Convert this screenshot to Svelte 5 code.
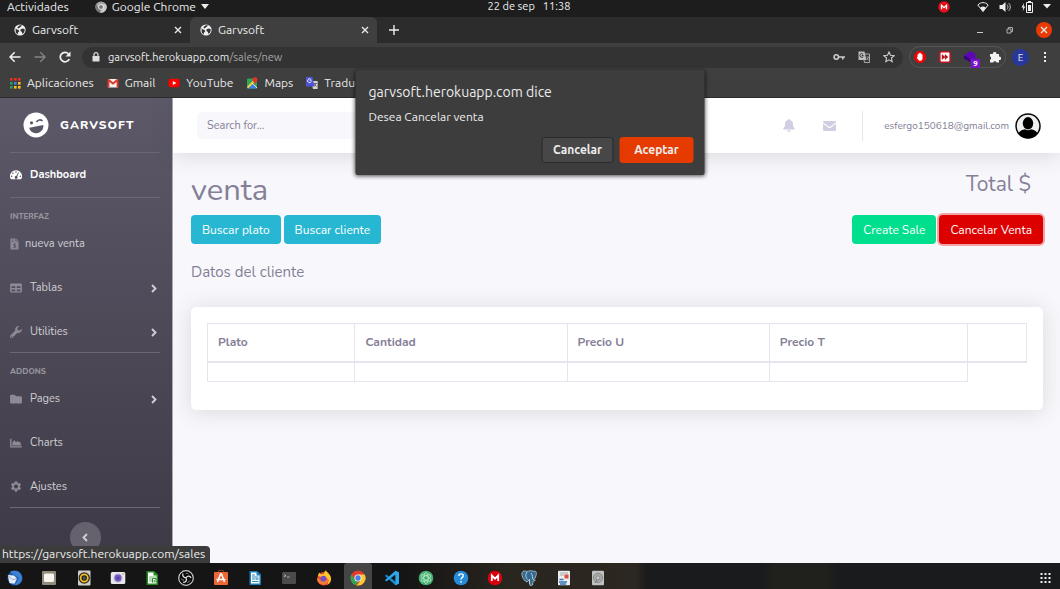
<script>
  const tabs = [
    { title: 'Garvsoft', active: false },
    { title: 'Garvsoft', active: true },
  ];
  const bookmarks = [
    { name: 'apps', label: 'Aplicaciones' },
    { name: 'gmail', label: 'Gmail' },
    { name: 'youtube', label: 'YouTube' },
    { name: 'maps', label: 'Maps' },
    { name: 'translate', label: 'Traductor' },
  ];
  const appColors = ['#ee2d20', '#ee2d20', '#ee2d20', '#22a45d', '#3f7ff0', '#fbc116', '#22a45d', '#fbc116', '#fbc116'];
  const interfaz = [
    { icon: 'invoice', label: 'nueva venta', tight: true },
    { icon: 'table', label: 'Tablas', more: true },
    { icon: 'wrench', label: 'Utilities', more: true },
  ];
  const addons = [
    { icon: 'folder', label: 'Pages', more: true },
    { icon: 'chart', label: 'Charts' },
    { icon: 'cog', label: 'Ajustes' },
  ];
  const columns = ['Plato', 'Cantidad', 'Precio U', 'Precio T', ''];
  const dock = [
    'thunderbird', 'files', 'rhythmbox', 'cheese', 'calc', 'obs', 'software', 'writer', 'terminal',
    'firefox', 'chrome', 'vscode', 'atom', 'help', 'mega', 'postgres', 'document', 'disk',
  ];
  let search = $state('');
</script>

{#snippet globe()}
  <svg class="i12" viewBox="0 0 12 12" aria-hidden="true">
    <circle cx="6" cy="6" r="5.6" fill="#f1f1f1" />
    <path d="M1.5 4.2 3 5.6l1.6.4.6 1.4L4 8.6 3.6 10.4 1.8 8.600Z M5.2 1.4l2.500-.3L7.200 2.600 5.600 3.400 4.700 4.500 3.200 3.800Z M6.600 5.200l2.600-.8 1.600 1.200-.6 2.600-1.600 1.800-.9-2.200-1.300-.8Z" fill="#333" />
  </svg>
{/snippet}

{#snippet cross()}
  <svg width="8" height="8" viewBox="0 0 8 8" aria-hidden="true"><path d="m1 1 6 6M7 1 1 7" stroke="#e8e8e8" stroke-width="1.4" /></svg>
{/snippet}

{#snippet chromeLogo(size, mono)}
  <svg width={size} height={size} viewBox="0 0 16 16" aria-hidden="true">
    <circle cx="8" cy="8" r="7.500" fill={mono ? '#a5a5a5' : '#e33b2e'} />
    <path d="M1.500 4.300 4.900 10l3.100 1.600-1.800 3.700A7.500 7.500 0 0 1 1.500 4.300Z" fill={mono ? '#777' : '#2da94f'} />
    <path d="M8 4.400h6.600a7.500 7.500 0 0 1-8.100 11L11 10Z" fill={mono ? '#c9c9c9' : '#fdc92f'} />
    <circle cx="8" cy="8" r="3.600" fill="#f4f4f4" /><circle cx="8" cy="8" r="2.700" fill={mono ? '#777' : '#4380e8'} />
  </svg>
{/snippet}

{#snippet markIcon(name)}
  <svg class="i12" viewBox="0 0 12 12" aria-hidden="true">
    {#if name === 'apps'}
      {#each appColors as color, k}
        <rect x={1 + (k % 3) * 4} y={1 + Math.floor(k / 3) * 4} width="2.600" height="2.600" fill={color} />
      {/each}
    {:else if name === 'gmail'}
      <path d="M1 2h10v8.500H1Z" fill="#f3f3f3" /><path d="M.5 10.500V2H2l4 3.200L10 2h1.500v8.500H9.600V5L6 7.800 2.400 5v5.500Z" fill="#db3b2d" />
    {:else if name === 'youtube'}
      <rect x=".5" y="1.800" width="11" height="8.400" rx="2" fill="#f00" /><path d="m4.800 4 3.600 2-3.600 2Z" fill="#fff" />
    {:else if name === 'maps'}
      <rect x="1" y="1.500" width="10" height="10" rx="1" fill="#30a853" /><path d="m1.500 11.500 5-5 4.500 5Z" fill="#4280ef" /><path d="m1 9.800 7-7 1.400 1.400-7.300 7.300Z" fill="#f7d34c" /><path d="M6.800 6.500 11 11" stroke="#eee" />
      <path d="M9 .3a2.500 2.500 0 0 1 2.500 2.500C11.500 4.600 9.600 5.600 9 7.300 8.400 5.600 6.500 4.600 6.500 2.800A2.500 2.500 0 0 1 9 .3Z" fill="#e0372b" />
    {:else}
      <path d="M5 4h6.600v8H7Z" fill="#d8d8d8" /><path d="M0 0h6.500l2 9.500H0Z" fill="#4e55dc" /><path d="M5.600 3.200H3.700M5.300 4.300a1.900 1.900 0 1 1-.5-2" fill="none" stroke="#fff" stroke-width=".9" /><path d="M7.900 6.500h3M9.400 5.800v.7c0 1.300-.5 2-1.200 2.700M8.500 7.300l2 2.400" fill="none" stroke="#555" stroke-width=".8" />
    {/if}
  </svg>
{/snippet}

{#snippet sideIcon(name)}
  <svg class="side-icon" class:slim={name === 'invoice'} viewBox={name === 'invoice' ? '0 0 9 12' : '0 0 12 12'} fill="currentColor" aria-hidden="true">
    {#if name === 'invoice'}
      <path fill-rule="evenodd" d="M1 .5h4.500v3h3V11a.6.6 0 0 1-.6.6H1A.6.6 0 0 1 .4 11V1.100A.6.6 0 0 1 1 .500ZM6.200.5 8.500 2.800H6.200Z" /><path d="M1.700 2h2M1.700 3.500h2M6 6.100H3.800v1.500H5.600v1.700H3M4.600 5.200v5" fill="none" stroke="#575361" stroke-width=".7" />
    {:else if name === 'table'}
      <path fill-rule="evenodd" d="M1.100 1.500h9.800a1 1 0 0 1 1 1v7a1 1 0 0 1-1 1H1.100a1 1 0 0 1-1-1v-7a1 1 0 0 1 1-1ZM1.500 4.300v1.800h3.700V4.300Zm5.300 0v1.800h3.700V4.300ZM1.500 7.400v1.800h3.700V7.400Zm5.300 0v1.800h3.700V7.400Z" />
    {:else if name === 'wrench'}
      <path fill-rule="evenodd" d="M11.800 2.800a3.300 3.300 0 0 1-4.300 3.900l-4.800 4.800a1.500 1.500 0 0 1-2.200-2.200l4.800-4.800A3.300 3.300 0 0 1 9.200.2L7.400 2l.3 2.300 2.300.3ZM1.600 9.800a.55.55 0 1 0 .1 0Z" />
    {:else if name === 'folder'}
      <path d="M1.100 1.700h3.500L6 3.200h4.900a1 1 0 0 1 1 1v5.200a1 1 0 0 1-1 1H1.100a1 1 0 0 1-1-1V2.700a1 1 0 0 1 1-1Z" />
    {:else if name === 'chart'}
      <path d="M.1 1.700h1.400v7.600h10.400v1.300H.1ZM2.300 8.500V5.800L4.300 3l1.600 2.300L7.600 4l1.100 1.300 1.200-.8 1.400 4Z" />
    {:else if name === 'cog'}
      <path fill-rule="evenodd" d="M4.900.3h2.200l.3 1.500 1 .6 1.500-.5L11 3.800 9.800 4.900v1.200l1.200 1-1.100 1.900-1.500-.5-1 .6-.3 1.600H4.900l-.3-1.600-1-.6-1.500.5L1 7.100l1.200-1V4.900L1 3.800l1.100-1.900 1.500.5 1-.6ZM6 3.500a2 2 0 1 0 .01 0Z" />
    {:else}
      <path fill-rule="evenodd" d="M6 1.200a6 6 0 0 1 5.200 9H.8A6 6 0 0 1 6 1.200ZM6 2.200a.7.7 0 1 0 .01 0ZM2.900 3.500a.7.7 0 1 0 .01 0ZM1.700 6.500a.7.7 0 1 0 .01 0ZM10.300 6.500a.7.7 0 1 0 .01 0ZM8.200 3.200 6.300 7A1.400 1.400 0 1 0 7.200 7.500L8.900 3.600Z" />
    {/if}
  </svg>
{/snippet}

{#snippet chevron()}
  <svg class="chevron" viewBox="0 0 6 9" aria-hidden="true"><path d="m1 1 3.500 3.500L1 8" fill="none" stroke="currentColor" stroke-width="1.900" /></svg>
{/snippet}

{#snippet menu(items)}
  {#each items as item}
    <li>
      <a class="nav-link" class:tight={item.tight} href="#{item.icon}">
        {@render sideIcon(item.icon)}<span>{item.label}</span>
        {#if item.more}{@render chevron()}{/if}
      </a>
    </li>
  {/each}
{/snippet}

{#snippet dockIcon(name)}
  {#if name === 'chrome'}
    {@render chromeLogo(16, false)}
  {:else}
    <svg width="16" height="16" viewBox="0 0 16 16" aria-hidden="true">
      {#if name === 'thunderbird'}
        <circle cx="8" cy="8" r="7.500" fill="#1c62b7" /><path d="M3 1.800A8 8 0 0 1 15 8c0 4-3 7-7 7l4-7Z" fill="#3f80d0" /><path d="M.8 5 7 5.500l3 3-2.500 5.300L2.500 13Z" fill="#e9eef5" /><path d="m1 5.600 4.500 4.100L10 8.500" fill="none" stroke="#8ea8c4" />
      {:else if name === 'files'}
        <rect x="1" y="1" width="14" height="14" rx="1" fill="#938b7b" /><rect x="3" y="3.500" width="10" height="8.500" rx="1.500" fill="#f7f5f0" />
      {:else if name === 'rhythmbox'}
        <rect x="2" y=".5" width="12.500" height="15" rx="1" fill="#d2cec5" /><circle cx="8.200" cy="8" r="5.700" fill="#25252a" /><circle cx="8.200" cy="8" r="3.600" fill="none" stroke="#f2bd1d" stroke-width="1.700" /><circle cx="8.200" cy="8" r="1.500" fill="#555" />
      {:else if name === 'cheese'}
        <rect x=".8" y="2" width="14.500" height="12" rx="1.500" fill="#e8e8ea" /><circle cx="8" cy="8" r="4.500" fill="#b9b5da" /><circle cx="8" cy="8" r="3.400" fill="#7658c4" /><circle cx="8" cy="8" r="1.600" fill="#534399" /><path d="M12.500 4h1.500" stroke="#e66" />
      {:else if name === 'calc'}
        <path d="M2.500 1H10l4 3.500V15H2.500Z" fill="#238823" /><path d="M4 2.500h5.500v3h3V13.500H4Z" fill="#fff" /><path d="M5 7h7M5 9h3M5 11h3" stroke="#70b970" /><path d="M8.500 12.500v-4h3.500v4M10.200 10v2.500" fill="none" stroke="#238823" />
      {:else if name === 'obs'}
        <circle cx="8" cy="8" r="7.300" fill="#090909" stroke="#c9c9c9" stroke-width="1.200" /><path d="M8 7.800C5.300 7.700 4.200 5.700 5 3.500M8 7.800c1.600-2.300 4-2 5 .2M8 7.800c1.200 2.600-.2 4.500-2.900 4.600" fill="none" stroke="#ddd" stroke-width="1.300" /><path d="M3 8.400a3 3 0 0 0 3 1.800M10.500 4a3 3 0 0 0-2.700-.6M12 10.500a3 3 0 0 1-2.600 1.800" fill="none" stroke="#888" />
      {:else if name === 'software'}
        <path d="M5.500 3V1.500a2.500 1.500 0 0 1 5 0V3" fill="none" stroke="#b64b20" /><rect x="1" y="2" width="14" height="13" rx="1" fill="#ed6836" /><path d="m4.500 12 3-8h1l3 8M3.500 9.500h9" fill="none" stroke="#fff" stroke-width="1.500" />
      {:else if name === 'writer'}
        <path d="M2.500 1H10l4 3.500V15H2.500Z" fill="#167bb7" /><path d="M4 2.500h5.500v3h3V13.500H4Z" fill="#fff" /><path d="M5 5h3M5 7h6.500M5 9h3M5 11.500h6.500" stroke="#2a86bd" /><path d="M8.500 8h3v2h-3Z" fill="#63acd3" />
      {:else if name === 'terminal'}
        <rect x="1" y="2" width="14" height="12" rx="1" fill="#4b4b4b" /><path d="m3 4.500 2 1.200-2 1.200M6 7h2.500" fill="none" stroke="#ccc" stroke-width=".8" />
      {:else if name === 'firefox'}
        <circle cx="8" cy="8.800" r="6.700" fill="#f54b35" /><path d="M2 6 3 2.500 5 4.500 8 4c0-2 1-3 2-3.800C10.800 2.700 15 4 15 9a6.800 6.800 0 0 1-4 6c3-4 1-7-1-7Z" fill="#ffc72c" /><path d="M2 7c2 5 6 5 9 2l2 1c-1 5-10 7-12 0Z" fill="#f77b30" /><circle cx="7.500" cy="8.700" r="2.900" fill="#7750c5" />
      {:else if name === 'vscode'}
        <path d="m11.500.8 3.500 1.600v11.200l-3.500 1.600L1 6l1.300-1.400L11.500 11.500Z" fill="#168ad0" /><path d="M11.500.8 1 10l1.300 1.400 9.200-6.900v10.700l3.500-1.600V2.400Z" fill="#2fa5ec" />
      {:else if name === 'atom'}
        <circle cx="8" cy="8" r="7.300" fill="#47ad72" /><g fill="none" stroke="#b8edc9" stroke-width=".8"><ellipse cx="8" cy="8" rx="2.200" ry="5.500" /><ellipse cx="8" cy="8" rx="2.200" ry="5.500" transform="rotate(60 8 8)" /><ellipse cx="8" cy="8" rx="2.200" ry="5.500" transform="rotate(120 8 8)" /></g>
      {:else if name === 'help'}
        <circle cx="8" cy="8" r="7.300" fill="#268bd8" /><path d="M5.900 6c0-3 4.400-2.700 4.400-.3C10.300 7.500 8 7.300 8 9.500" fill="none" stroke="#fff" stroke-width="1.400" /><circle cx="8" cy="11.800" r=".9" fill="#fff" />
      {:else if name === 'mega'}
        <circle cx="8" cy="8" r="7.300" fill="#d9000d" /><path d="M4.800 11V5.500L8 8.700l3.200-3.200V11" fill="none" stroke="#fff" stroke-width="1.800" />
      {:else if name === 'postgres'}
        <path d="M1 3c1-3 4-2 5-1.500C8 .5 11 .5 12 1.300c3-.8 4 1 3 4.200-.5 2-1.500 4-2.700 4l2 .8-2.300 1.200-.5 3.500-2.500.5L8 10c-1 .6-1.500 1-2 2C4 12 0 6 1 3Z" fill="#34688f" stroke="#b9ccd8" stroke-width=".8" /><path d="M6 2C4 5 5 8 6.500 9.500M10 3c2 2 1 5 2 6.500M8.500 9v5" fill="none" stroke="#d6e3eb" stroke-width=".8" />
      {:else if name === 'document'}
        <rect x="2" y=".8" width="12" height="14.500" rx=".8" fill="#ececec" /><path d="M4 3h8M4 5h4" stroke="#aaa" /><rect x="8.500" y="4.500" width="4" height="4" fill="#d95340" /><path d="M3.500 9.500h4M3 12h8M4 14h6" stroke="#3176b5" stroke-width="1.300" />
      {:else}
        <rect x="2" y=".8" width="12" height="14.500" rx="1" fill="#bfc0c1" /><circle cx="8" cy="7.800" r="4.600" fill="#aaa" stroke="#858585" /><circle cx="8" cy="7.800" r="2" fill="#c8c8c8" stroke="#888" /><path d="m5 13 2-3" stroke="#777" />
      {/if}
    </svg>
  {/if}
{/snippet}

<div class="desktop">
  <header class="system-bar">
    <div class="sys-left">
      <button>Actividades</button>
      <button class="app-menu">{@render chromeLogo(12, true)}Google Chrome<svg width="8" height="5" viewBox="0 0 8 5" aria-hidden="true"><path d="M0 0h8L4 5Z" fill="#eee" /></svg></button>
    </div>
    <button class="clock"><span>22 de sep</span><span>11:38</span></button>
    <div class="sys-right">
      <svg class="mega-tray" width="12" height="12" viewBox="0 0 12 12" aria-hidden="true"><circle cx="6" cy="6" r="5.700" fill="#e80e1a" /><path d="M3.500 8.200V4.300L6 6.700l2.500-2.400v3.900" fill="none" stroke="#fff" stroke-width="1.300" /></svg>
      <svg width="12" height="12" viewBox="0 0 12 12" aria-hidden="true"><path d="M.8 4C4 .8 8 .8 11.200 4L6 10.500Z" fill="none" stroke="#eee" /><path d="M3.300 6.600c1.600-1.500 3.800-1.500 5.400 0L6 10.800Z" fill="#eee" /></svg>
      <svg width="12" height="12" viewBox="0 0 12 12" aria-hidden="true"><path d="M.5 4h2.700L6.500 1v10L3.200 8H.5Z" fill="#eee" /><path d="M8 3.500c1.300 1.300 1.300 3.700 0 5M9.500 2c2.400 2 2.400 6 0 8" fill="none" stroke="#bbb" /></svg>
      <svg width="12" height="12" viewBox="0 0 12 12" aria-hidden="true"><path d="M3 2 .5 6.500h1.700L1.800 10l2.500-4.500H2.700Z" fill="#eee" /><path d="M5.500 1.500h6v10h-6ZM7 .5h3" fill="none" stroke="#eee" /><path d="M7 4h3v6H7Z" fill="#eee" /></svg>
      <svg width="8" height="5" viewBox="0 0 8 5" aria-hidden="true"><path d="M0 0h8L4 4.500Z" fill="#eee" /></svg>
    </div>
  </header>

  <div class="tab-strip">
    {#each tabs as tab}
      <div class="tab" class:active={tab.active}>
        {@render globe()}<span>{tab.title}</span><button aria-label="Cerrar pestaña">{@render cross()}</button>
      </div>
    {/each}
    <button class="new-tab" aria-label="Nueva pestaña"><svg width="10" height="10" viewBox="0 0 10 10"><path d="M5 0v10M0 5h10" stroke="#eee" stroke-width="1.400" /></svg></button>
    <div class="window-buttons">
      <button aria-label="Minimizar"><svg width="8" height="8" viewBox="0 0 8 8"><path d="M1 6.500h6" stroke="#ccc" /></svg></button>
      <button aria-label="Restaurar"><svg width="8" height="8" viewBox="0 0 8 8"><path d="M1 3h4v4H1ZM2.500 3V1.500h4V5.500H5" fill="none" stroke="#bbb" stroke-width=".9" /></svg></button>
      <button class="close" aria-label="Cerrar">{@render cross()}</button>
    </div>
  </div>

  <div class="toolbar">
    <div class="nav-buttons">
      <button aria-label="Atrás"><svg width="12" height="12" viewBox="0 0 12 12"><path d="M11.500 6H1M5.700 1.300 1 6l4.700 4.700" fill="none" stroke="#f2f2f2" stroke-width="1.500" /></svg></button>
      <button aria-label="Adelante"><svg width="12" height="12" viewBox="0 0 12 12"><path d="M.5 6H11M6.300 1.300 11 6l-4.700 4.700" fill="none" stroke="#858585" stroke-width="1.300" /></svg></button>
      <button aria-label="Recargar"><svg width="12" height="12" viewBox="0 0 12 12"><path d="M10.300 8A4.700 4.700 0 1 1 9.400 2.800" fill="none" stroke="#f2f2f2" stroke-width="1.700" /><path d="M11.500.5v5h-5Z" fill="#f2f2f2" /></svg></button>
    </div>
    <div class="omnibox">
      <svg width="8" height="10" viewBox="0 0 8 10" aria-hidden="true"><path d="M.5 4h7v5.500h-7Z" fill="#ddd" /><path d="M2 4.500V2.700a2 2 0 0 1 4 0v1.800" fill="none" stroke="#ddd" stroke-width="1.200" /></svg>
      <div class="address" contenteditable="true" role="textbox" tabindex="0" aria-label="Dirección">garvsoft.herokuapp.com<span>/sales/new</span></div>
      <svg width="12" height="12" viewBox="0 0 12 12" aria-hidden="true"><circle cx="3.300" cy="6" r="2.200" fill="none" stroke="#ccc" stroke-width="1.600" /><path d="M5.500 6H12M9.800 6v2.600" stroke="#ccc" stroke-width="1.600" /></svg>
      <svg width="12" height="12" viewBox="0 0 12 12" aria-hidden="true"><path d="M5 3h6.500v8.500H6.500Z" fill="none" stroke="#aaa" /><path d="M.5.5h6l2 8.500h-8Z" fill="#bbb" /><path d="M5.500 4.500H3.800M5.300 5.400A1.800 1.800 0 1 1 5 3.200" fill="none" stroke="#333" /><path d="M8.500 6H11M10.300 6c0 1.500-.8 2.500-1.800 3M9 7l1.500 2.300" fill="none" stroke="#aaa" stroke-width=".8" /></svg>
      <svg width="12" height="12" viewBox="0 0 12 12" aria-hidden="true"><path d="m6 1 1.500 3.300 3.600.4L8.400 7l.8 3.700L6 8.800l-3.200 1.900.8-3.700L.9 4.700l3.600-.4Z" fill="none" stroke="#ccc" stroke-width="1.100" /></svg>
    </div>
    <div class="extensions">
      <button aria-label="Bloqueador"><svg width="12" height="12" viewBox="0 0 12 12"><path d="M3.700 0h4.600L12 3.700v4.600L8.300 12H3.700L0 8.300V3.700Z" fill="#e80505" /><path d="M3.500 6V3.500h1V2.300h1V1.800h1v.6h1v1h1V8L7.300 9.800H5.200L2.800 7l.3-.7Z" fill="#fff" /></svg></button>
      <button aria-label="Velocidad"><svg width="12" height="12" viewBox="0 0 12 12"><rect x=".8" y=".8" width="10.400" height="10.400" rx="1.500" fill="#fff" stroke="#c4141d" stroke-width="1.600" /><path d="M3 3.400 6 6 3 8.600ZM6 3.400 9 6 6 8.600Z" fill="#b80f18" stroke="#b80f18" stroke-width=".4" /></svg></button>
      <button class="badged" aria-label="Extensión"><svg width="12" height="12" viewBox="0 0 12 12"><path d="m0 4.500 6-4.500 5.500 3v5.500L6.500 11 0 7.500Z" fill="#5a08b5" /><path d="m0 4.500 6 3V11L0 7.500Z" fill="#380379" /></svg><b>9</b></button>
      <button aria-label="Extensiones"><svg width="12" height="12" viewBox="0 0 12 12"><path d="M1 3h3a1.700 1.700 0 1 1 3.300 0H10v2.700a1.700 1.700 0 1 1 0 3.200v2.700H7.500a1.700 1.700 0 0 0-3.300 0H1V8.800a1.700 1.700 0 0 0 0-3.200Z" fill="#f2f2f2" /></svg></button>
    </div>
    <button class="profile" aria-label="Perfil">E</button>
    <button class="dots" aria-label="Menú"><svg width="4" height="12" viewBox="0 0 4 12"><path d="M1 1h2v2H1ZM1 5h2v2H1ZM1 9h2v2H1Z" fill="#eee" /></svg></button>
  </div>

  <nav class="bookmarks" aria-label="Marcadores">
    {#each bookmarks as mark}
      <a href="#{mark.name}">{@render markIcon(mark.name)}{mark.label}</a>
    {/each}
  </nav>

  <div class="page">
    <aside class="sidebar">
      <a class="brand" href="#home">
        <svg width="26" height="26" viewBox="0 0 26 26" aria-hidden="true"><circle cx="13" cy="13" r="12.500" fill="#fff" /><circle cx="8.500" cy="10.800" r="1.600" fill="#5b5766" /><path d="M13.500 10c1.500-2.400 4-2.800 6-1" fill="none" stroke="#5b5766" stroke-width="1.600" /><path d="M6.300 15.800 20.300 13c.6 4-2.200 7.500-6.300 8.200-4 .5-7-1.900-7.700-5.400Z" fill="#5b5766" /></svg>
        <span>GARVSOFT</span>
      </a>
      <hr />
      <a class="nav-link current" href="#dashboard">{@render sideIcon('gauge')}<span>Dashboard</span></a>
      <hr />
      <h2>INTERFAZ</h2>
      <ul>{@render menu(interfaz)}</ul>
      <hr />
      <h2>ADDONS</h2>
      <ul>{@render menu(addons)}</ul>
      <hr />
      <button class="collapse" aria-label="Contraer menú">{@render chevron()}</button>
    </aside>

    <div class="content">
      <header class="topbar">
        <input type="search" placeholder="Search for..." aria-label="Buscar" bind:value={search} />
        <div class="top-actions">
          <button aria-label="Alertas"><svg width="12" height="13" viewBox="0 0 12 13"><path d="M6 0c.6 0 1 .5.900 1.100C9 1.600 10 3.200 10 5c0 2.500.7 3.300 1.500 4.200.5.600.2 1.300-.6 1.300H1.100C.3 10.500 0 9.800.500 9.200 1.300 8.300 2 7.500 2 5c0-1.800 1-3.400 3.100-3.900C5 .5 5.400 0 6 0ZM4.400 11.300h3.200a1.600 1.600 0 0 1-3.200 0Z" fill="currentColor" /></svg></button>
          <button aria-label="Mensajes"><svg width="13" height="10" viewBox="0 0 13 10"><path d="M1.200 0h10.600A1.200 1.200 0 0 1 13 1.200L7.500 5.600q-1 .8-2 0L0 1.200A1.200 1.200 0 0 1 1.200 0ZM0 2.400l5 4q1.500 1.100 3 0l5-4v6.400A1.200 1.200 0 0 1 11.800 10H1.200A1.200 1.200 0 0 1 0 8.800Z" fill="currentColor" /></svg></button>
        </div>
        <button class="account">esfergo150618@gmail.com
          <svg width="26" height="26" viewBox="0 0 26 26" aria-hidden="true"><circle cx="13" cy="13" r="12" fill="#eee" stroke="#050505" stroke-width="1.500" /><ellipse cx="13" cy="10.300" rx="5.200" ry="6.200" /><path d="M3.500 20.500c1-2.500 4-4 6.500-4.300 1.800 1.500 4.200 1.500 6 0 2.500.3 5.500 1.800 6.500 4.300A12 12 0 0 1 3.500 20.500Z" /></svg>
        </button>
      </header>

      <main>
        <div class="heading"><h1>venta</h1><span class="total">Total $</span></div>
        <div class="actions">
          <div class="group"><button class="btn info">Buscar plato</button><button class="btn info">Buscar cliente</button></div>
          <div class="group"><button class="btn success">Create Sale</button><button class="btn danger">Cancelar Venta</button></div>
        </div>
        <h3>Datos del cliente</h3>
        <section class="card">
          <table>
            <colgroup><col class="c1" /><col class="c2" /><col class="c3" /><col class="c4" /><col /></colgroup>
            <thead><tr>{#each columns as column}<th scope="col">{column}</th>{/each}</tr></thead>
            <tbody><tr><td></td><td></td><td></td><td></td></tr></tbody>
          </table>
        </section>
      </main>
    </div>
    <div class="link-status">https://garvsoft.herokuapp.com/sales</div>
  </div>

  <footer class="dock">
    <div class="launchers">
      {#each dock as name}
        <button class:running={name === 'chrome'} aria-label={name}>{@render dockIcon(name)}</button>
      {/each}
    </div>
    <button class="all-apps" aria-label="Mostrar aplicaciones">
      <svg width="11" height="11" viewBox="0 0 11 11"><path d="M1.500 0v11M5.500 0v11M9.500 0v11" stroke="#eee" stroke-width="2" stroke-dasharray="2 2" /></svg>
    </button>
  </footer>

  <div class="alert" role="alertdialog" aria-labelledby="alert-title" aria-describedby="alert-text">
    <h2 id="alert-title">garvsoft.herokuapp.com dice</h2>
    <p id="alert-text">Desea Cancelar venta</p>
    <div class="alert-buttons"><button>Cancelar</button><button class="accept">Aceptar</button></div>
  </div>
</div>

<style>
  :global(body) { margin: 0; }
  .desktop, .desktop * { box-sizing: border-box; }
  .desktop {
    position: relative;
    display: flex;
    flex-direction: column;
    min-height: 100vh;
    font: 12px/16px Ubuntu, "Noto Sans", sans-serif;
    color: #ececec;
  }
  button { font: inherit; color: inherit; background: none; border: 0; padding: 0; margin: 0; cursor: pointer; }
  a { color: inherit; text-decoration: none; }
  svg { display: block; flex: none; }
  h1, h2, h3, p, ul { margin: 0; padding: 0; font-weight: 400; list-style: none; }
  .i12 { width: 12px; height: 12px; }

  .system-bar { display: grid; grid-template-columns: 1fr auto 1fr; align-items: center; height: 17px; padding: 0 9px 4px 7px; background: #1d1d1d; line-height: 13px; }
  .sys-left, .sys-right, .app-menu, .clock { display: flex; align-items: center; }
  .sys-left { gap: 26px; }
  .app-menu { gap: 5px; }
  .clock { gap: 8px; font-size: 11px; }
  .sys-right { justify-content: flex-end; gap: 10px; }
  .mega-tray { margin-right: 17px; }

  .tab-strip { display: flex; height: 26px; background: #2c2c2c; }
  .tab { display: flex; align-items: center; flex: 0 1 187px; gap: 6px; padding: 0 8px 0 10px; border-radius: 6px 6px 0 0; }
  .tab:first-child { flex-basis: 190px; padding-left: 14px; }
  .tab span { flex: 1; }
  .tab.active { background: #3f3f3f; }
  .new-tab { padding: 0 12px; }
  .window-buttons { display: flex; align-items: center; gap: 22px; margin-left: auto; padding-right: 8px; }
  .window-buttons .close { display: grid; place-items: center; width: 16px; height: 16px; border-radius: 50%; background: #e93a05; }

  .toolbar { display: flex; align-items: center; height: 28px; padding: 0 13px 0 9px; background: #3f3f3f; }
  .nav-buttons { display: flex; gap: 13px; margin-right: 11px; }
  .omnibox { display: flex; align-items: center; flex: 1; gap: 13px; height: 21px; padding: 0 8px 0 10px; border-radius: 11px; background: #333; }
  .address { flex: 1; margin-left: -5px; font-size: 11px; outline: none; white-space: nowrap; }
  .address span { color: #a5a5a5; }
  .extensions { display: flex; align-items: center; gap: 13px; height: 22px; margin: 0 6px; padding: 0 4px; border: 1px solid #555; border-radius: 11px; }
  .badged { position: relative; }
  .badged b { position: absolute; right: -4px; bottom: -5px; width: 9px; height: 9px; background: #7a12cd; color: #fff; font-size: 8px; line-height: 9px; }
  .profile { width: 17px; height: 17px; border-radius: 50%; background: #26389c; font-size: 10px; line-height: 17px; }
  .dots { margin-left: 14px; }

  .bookmarks { display: flex; align-items: center; gap: 13px; height: 27px; padding: 0 9px 3px; background: #3f3f3f; border-bottom: 1px solid #2b2b2b; }
  .bookmarks a { display: flex; align-items: center; gap: 6px; }

  .page { position: relative; display: flex; flex: 1; font-family: Nunito, "Open Sans", sans-serif; color: #858097; background: #f8f8fc; }
  .sidebar { display: flex; flex-direction: column; flex: 0 0 173px; padding: 0 12px 0 10px; border-right: 1px solid #aaa8b1; background: linear-gradient(#5d5969, #3d3945); color: #cfced3; font-size: 11px; }
  hr { width: 100%; height: 1px; margin: 0; border: 0; background: #6b6875; flex: none; }
  .brand { display: flex; align-items: center; gap: 11px; height: 54px; padding-left: 13px; color: #fff; font-size: 12px; font-weight: 800; letter-spacing: 1px; }
  .nav-link { display: flex; align-items: center; gap: 8px; height: 44px; }
  .nav-link.tight { gap: 6px; }
  .nav-link.current { color: #fff; font-weight: 700; }
  .nav-link span { flex: 1; }
  .side-icon { width: 12px; height: 12px; color: #8d8a95; }
  .side-icon.slim { width: 9px; }
  .current .side-icon { color: #fff; }
  .chevron { width: 6px; height: 9px; margin-right: 3px; }
  .sidebar ul { margin-bottom: -2px; }
  .sidebar h2 { padding-top: 13px; color: #96949d; font-size: 8px; line-height: 11px; font-weight: 800; }
  .collapse { display: grid; place-items: center; align-self: center; width: 31px; height: 31px; margin-top: 14px; border-radius: 50%; background: #65626d; }
  .collapse .chevron { margin: 0; transform: scaleX(-1); }

  .content { flex: 1; min-width: 0; }
  .topbar { display: flex; align-items: center; height: 55px; padding: 0 19px 0 24px; background: #fff; box-shadow: 0 2px 22px rgba(58, 59, 69, .18); }
  .topbar input { width: 300px; height: 27px; padding: 0 10px; border: 0; border-radius: 5px; background: #f8f8fc; color: #6e6a7e; font: inherit; font-size: 11px; }
  .topbar input::placeholder { color: #858097; opacity: 1; }
  .top-actions { display: flex; align-items: center; gap: 28px; height: 30px; margin-left: auto; padding-right: 26px; border-right: 1px solid #e8e8f0; color: #d1cee2; }
  .account { display: flex; align-items: center; gap: 6px; padding-left: 21px; font-size: 10px; }
  main { padding: 17px 17px 24px 18px; }
  .heading { display: flex; justify-content: space-between; align-items: flex-start; height: 45px; padding-right: 12px; }
  h1 { font-size: 31px; line-height: 40px; }
  .total { font-size: 21px; line-height: 28px; }
  .actions, .group { display: flex; justify-content: space-between; gap: 3px; }
  .btn { height: 29px; padding: 0 11px; border-radius: 4px; color: #fff; font-size: 12px; }
  .info { background: #27b7d2; }
  .success { background: #00df8d; }
  .danger { background: #dc0000; box-shadow: 0 0 0 2px #f4a4a4; }
  h3 { margin: 18px 0 25px; font-size: 15px; line-height: 20px; }
  .card { min-height: 103px; padding: 16px; border-radius: 5px; background: #fff; box-shadow: 0 2px 22px rgba(58, 59, 69, .17); }
  table { width: 100%; table-layout: fixed; border-collapse: collapse; }
  .c1 { width: 18%; } .c2 { width: 25.900%; } .c3 { width: 24.700%; } .c4 { width: 24.200%; }
  th, td { border: 1px solid #e6e4f1; padding: 0 10px; text-align: left; }
  th { height: 38px; border-bottom-width: 2px; font-size: 12px; font-weight: 700; }
  td { height: 20px; }
  .link-status { position: absolute; left: 0; bottom: 0; padding: 0 5px 1px 2px; border-radius: 0 4px 0 0; background: #3c3c3c; color: #ececec; font: 12px/16px Ubuntu, "Noto Sans", sans-serif; }

  .dock { display: flex; align-items: center; justify-content: space-between; height: 26px; padding: 0 9px 0 1px; background: linear-gradient(90deg, #151515 38%, #29251f 48%, #2c2720 60%, #1a1b1d 61%, #1a1b1d 72%, #20201c 73%, #20201c 78%, #1a1b1d 79%); }
  .launchers { display: flex; justify-content: space-between; flex: 0 1 611px; }
  .launchers button { display: grid; place-items: center; width: 28px; height: 26px; padding-top: 4px; border-radius: 3px 3px 0 0; }
  .launchers .running { background: #454545; }
  .all-apps { padding-top: 4px; }

  .alert { position: absolute; top: 70px; left: 50%; width: 349px; transform: translateX(-50%); padding: 12px 11px 12px 13px; border-radius: 2px; background: #3d3d3d; box-shadow: 0 1px 4px rgba(0, 0, 0, .7); }
  .alert h2 { font-size: 14px; line-height: 20px; }
  .alert p { margin: 7px 0 12px; font-size: 12px; }
  .alert-buttons { display: flex; justify-content: flex-end; gap: 6px; }
  .alert-buttons button { min-width: 72px; height: 26px; border: 1px solid #292929; border-radius: 3px; background: #474747; font-size: 12px; font-weight: 600; }
  .alert-buttons .accept { min-width: 74px; border-color: #e63b00; background: #e63b00; }
</style>
